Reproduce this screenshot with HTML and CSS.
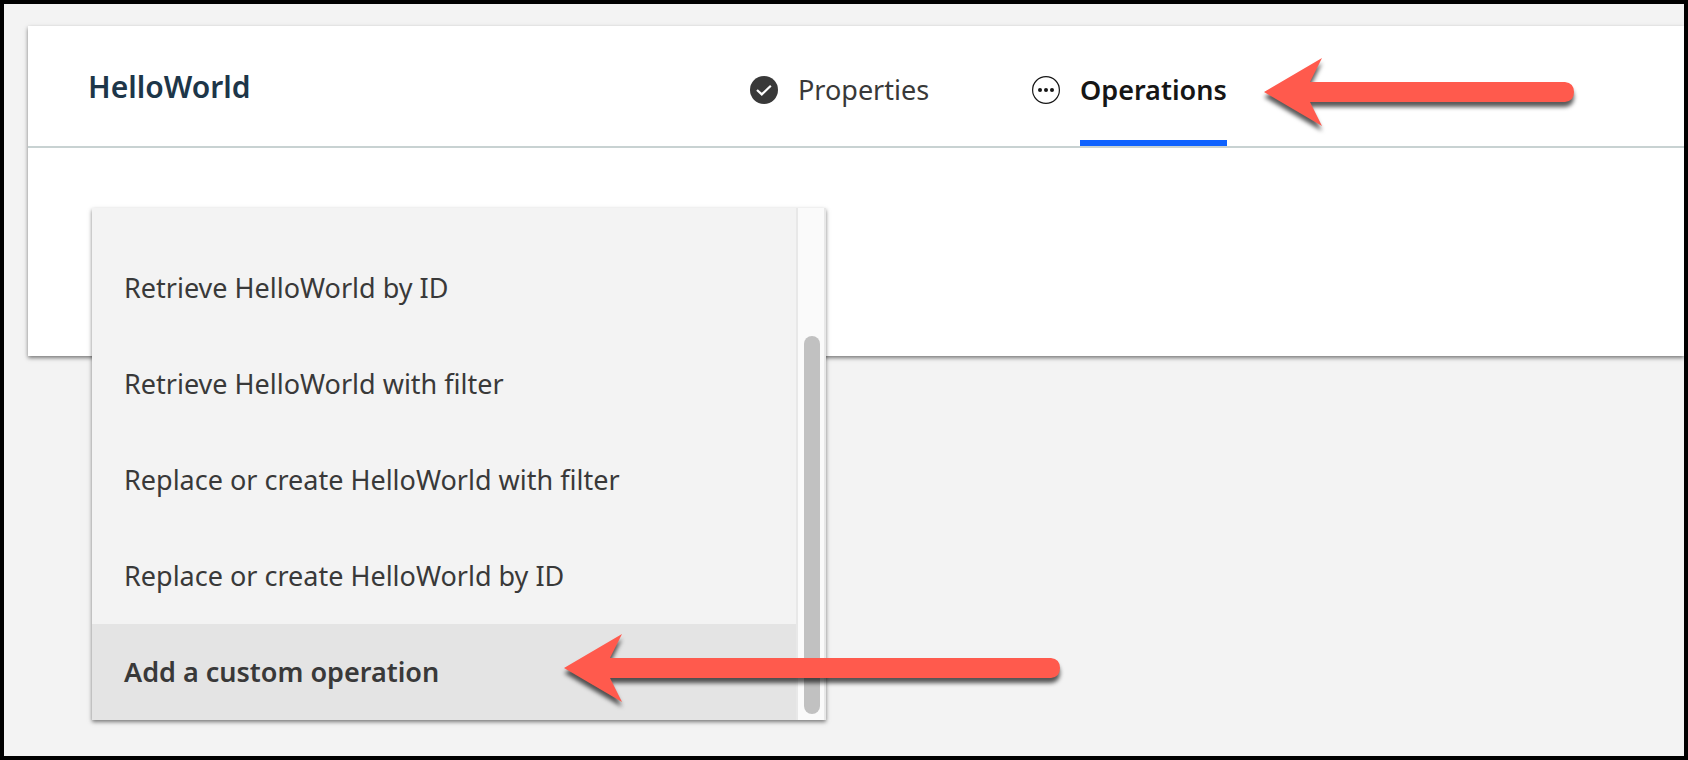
FILE: index.html
```html
<!DOCTYPE html>
<html lang="en">
<head>
<meta charset="utf-8">
<title>HelloWorld – Operations</title>
<link rel="stylesheet" href="styles.css">
</head>
<body>
<main class="frame">
  <section class="card">
    <header class="card-header">
      <h1 class="title">HelloWorld</h1>
      <nav class="tabs" aria-label="Model steps">
        <button class="tab" type="button">
          <svg class="tab-icon" viewBox="0 0 28 28" aria-hidden="true">
            <circle cx="14" cy="14" r="14" fill="#393939"/>
            <path d="M7 14l4.8 4.4 9-8.6" fill="none" stroke="#fff" stroke-width="2.2"/>
          </svg>
          <span class="tab-label">Properties</span>
        </button>
        <button class="tab tab-current" type="button" aria-current="step">
          <svg class="tab-icon" viewBox="0 0 28 28" aria-hidden="true">
            <circle cx="14" cy="14" r="13.4" fill="none" stroke="#161616" stroke-width="1.2"/>
            <circle cx="8" cy="14" r="2" fill="#161616"/>
            <circle cx="14" cy="14" r="2" fill="#161616"/>
            <circle cx="20" cy="14" r="2" fill="#161616"/>
          </svg>
          <span class="tab-label">Operations</span>
        </button>
      </nav>
    </header>
    <div class="card-body">
      <div class="menu">
        <div class="menu-items">
          <button class="menu-item" type="button">Retrieve HelloWorld by ID</button>
          <button class="menu-item" type="button">Retrieve HelloWorld with filter</button>
          <button class="menu-item" type="button">Replace or create HelloWorld with filter</button>
          <button class="menu-item" type="button">Replace or create HelloWorld by ID</button>
          <button class="menu-item menu-item-active" type="button">Add a custom operation</button>
        </div>
        <div class="scroll-track"><div class="scroll-thumb"></div></div>
      </div>
    </div>
  </section>
  <svg class="arrow arrow-tab" width="310" height="70" aria-hidden="true">
    <path d="M0 34L58 0L46 24H301Q310 25 310 34T301 44H46L58 68Z" fill="#ff5a4d"/>
  </svg>
  <svg class="arrow arrow-item" width="496" height="70" aria-hidden="true">
    <path d="M0 34L58 0L46 24H487Q496 25 496 34T487 44H46L58 68Z" fill="#ff5a4d"/>
  </svg>
</main>
</body>
</html>
```
FILE: styles.css
```css
* {
  box-sizing: border-box;
}

body {
  margin: 0;
  color: #393939;
  background: #f3f3f3;
  font: 27px/36px "Noto Sans", sans-serif;
}

button {
  border: 0;
  color: inherit;
  background: none;
  font: inherit;
  cursor: pointer;
}

.frame {
  position: relative;
  min-height: 100vh;
  padding: 22px 0 36px 24px;
  overflow: hidden;
  border: 4px solid #000;
}

.card {
  background: #fff;
  box-shadow: 0 2px 4px rgba(0, 0, 0, 0.5);
}

.card-header {
  display: flex;
  height: 122px;
  border-bottom: 2px solid #c8d2d2;
}

.title {
  flex: 0 0 722px;
  margin: 0;
  padding: 41px 0 0 60px;
  color: #1d3649;
  font-size: 30px;
  font-weight: 600;
  line-height: 40px;
}

.tabs {
  display: flex;
  gap: 100px;
}

.tab {
  display: flex;
  gap: 20px;
  padding: 0;
}

.tab-icon {
  width: 28px;
  height: 28px;
  margin-top: 50px;
}

.tab-label {
  height: 120px;
  min-width: 134px;
  padding-top: 46px;
  text-align: left;
}

.tab-current {
  color: #161616;
  font-weight: 600;
}

.tab-current .tab-label {
  border-bottom: 6px solid #0f62fe;
}

.card-body {
  position: relative;
  height: 208px;
}

.menu {
  position: absolute;
  top: 60px;
  left: 64px;
  display: flex;
  width: 734px;
  background: #f3f3f3;
  box-shadow: 0 2px 4px rgba(0, 0, 0, 0.5);
}

.menu-items {
  display: flex;
  flex: 1;
  flex-direction: column;
  padding-top: 32px;
}

.menu-item {
  height: 96px;
  padding: 0 32px;
  text-align: left;
}

.menu-item-active {
  background: #e4e4e4;
  font-weight: 600;
}

.scroll-track {
  display: flex;
  width: 30px;
  padding: 128px 4px 6px 6px;
  border: solid #e8e8e8;
  border-width: 0 2px;
  background: #fafafa;
}

.scroll-thumb {
  width: 16px;
  border-radius: 8px;
  background: #c1c1c1;
}

.arrow {
  position: absolute;
  overflow: visible;
  pointer-events: none;
  filter: drop-shadow(0 5px 2px rgba(0, 0, 0, 0.65));
}

.arrow-tab {
  top: 54px;
  left: 1260px;
}

.arrow-item {
  top: 630px;
  left: 560px;
}
```
